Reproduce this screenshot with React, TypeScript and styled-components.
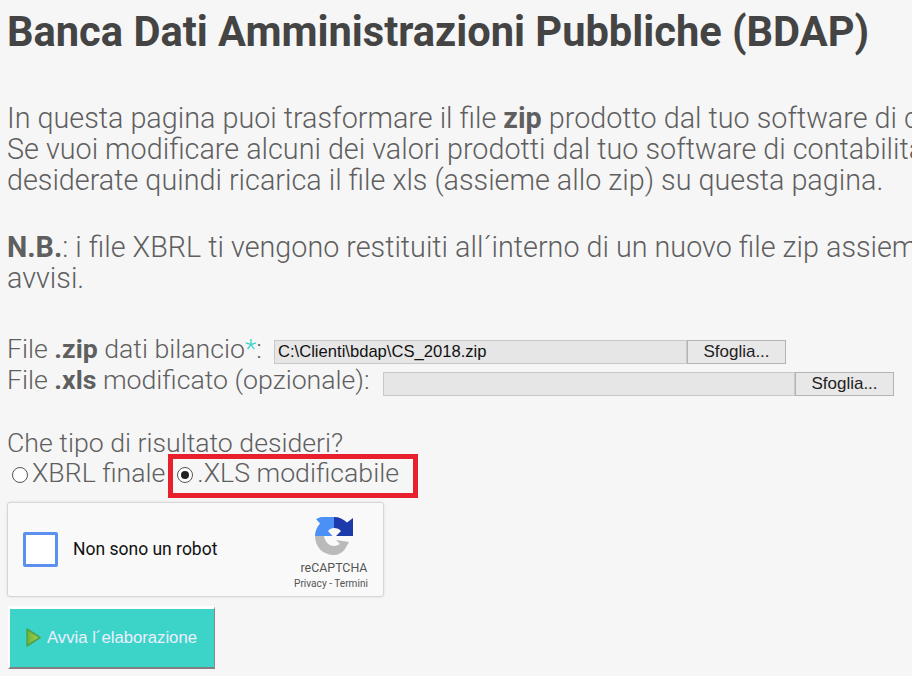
import React from "react";
import styled, { createGlobalStyle } from "styled-components";

const Global = createGlobalStyle`
  html, body { margin: 0; padding: 0; width: 912px; height: 676px; overflow: hidden; background: #f6f6f6; }
`;

const Page = styled.div`
  width: 912px;
  height: 676px;
  overflow: hidden;
  padding: 11px 0 0 7px;
  box-sizing: border-box;
  font-family: Roboto, "Liberation Sans", sans-serif;
  font-weight: 300;
  font-size: 26.7px;
  line-height: 31px;
  color: #5f5f5f;
`;

const Title = styled.h1`
  margin: 0 0 50px;
  font-size: 41.6px;
  line-height: 42px;
  font-weight: 700;
  color: #444;
  white-space: nowrap;
`;

const Paragraph = styled.p`
  margin: 0 0 36px;
  font-size: 28.75px;
  white-space: nowrap;
  b { font-weight: 700; }
`;

const Closing = styled(Paragraph)`
  margin-bottom: 40px;
`;

const FileRow = styled.div`
  display: flex;
  align-items: flex-start;
  height: 31px;
  white-space: nowrap;
  b { font-weight: 700; }
`;

const FileLabel = styled.span<{ $width: number }>`
  width: ${(p) => p.$width}px;
  flex: none;
`;

const Star = styled.span`
  color: #3cd4c8;
`;

const FileFields = styled.div<{ $top: number }>`
  display: flex;
  margin-top: ${(p) => p.$top}px;
`;

const FileName = styled.div<{ $width: number }>`
  width: ${(p) => p.$width}px;
  height: 24px;
  box-sizing: border-box;
  background: #e6e6e6;
  border: 1px solid #c8c8c8;
  font-family: "Liberation Sans", Arial, sans-serif;
  font-weight: 400;
  font-size: 16.6px;
  line-height: 22px;
  padding-left: 3px;
  color: #111;
`;

const Browse = styled.div`
  width: 99px;
  height: 24px;
  box-sizing: border-box;
  background: #e8e8e8;
  border: 1px solid #b4b4b4;
  font-family: "Liberation Sans", Arial, sans-serif;
  font-weight: 400;
  font-size: 17px;
  line-height: 21px;
  text-align: center;
  color: #222;
`;

const Question = styled.div`
  margin-top: 32px;
  height: 26px;
`;

const Choices = styled.div`
  display: flex;
  align-items: center;
  height: 44px;
  padding-left: 5px;
`;

const ChoiceText = styled.span`
  margin-top: -5px;
`;

const Radio = styled.span<{ $on?: boolean }>`
  width: 16px;
  height: 16px;
  box-sizing: border-box;
  border: 1px solid #555;
  border-radius: 50%;
  background: #fff;
  margin-right: 4px;
  margin-top: -2px;
  display: flex;
  align-items: center;
  justify-content: center;
  flex: none;
  &::after {
    content: "";
    display: ${(p) => (p.$on ? "block" : "none")};
    width: 8px;
    height: 8px;
    border-radius: 50%;
    background: #222;
  }
`;

const Highlight = styled.div`
  display: flex;
  align-items: center;
  margin-left: 3px;
  height: 44px;
  width: 250px;
  box-sizing: border-box;
  border: 5px solid #e8202c;
  padding-left: 4px;
`;

const Captcha = styled.div`
  margin-top: 4px;
  width: 377px;
  height: 95px;
  box-sizing: border-box;
  background: #f9f9f9;
  border: 1px solid #d6d6d6;
  border-radius: 3px;
  box-shadow: 0 0 3px rgba(0, 0, 0, 0.1);
  display: flex;
  align-items: center;
  padding-left: 15px;
`;

const Check = styled.div`
  width: 35px;
  height: 35px;
  box-sizing: border-box;
  background: #fff;
  border: 3px solid #5b90ee;
  border-radius: 2px;
  flex: none;
`;

const CaptchaLabel = styled.span`
  margin-left: 15px;
  margin-top: -2px;
  font-weight: 400;
  font-size: 17.5px;
  color: #111;
  line-height: 20px;
`;

const Brand = styled.div`
  margin-left: auto;
  width: 84px;
  margin-right: 7px;
  display: flex;
  flex-direction: column;
  align-items: center;
  align-self: flex-start;
  padding-top: 14px;
`;

const BrandName = styled.span`
  font-weight: 400;
  font-size: 12.4px;
  line-height: 14px;
  color: #555;
  margin-top: 6px;
`;

const BrandLinks = styled.span`
  font-weight: 400;
  font-size: 10.1px;
  line-height: 13px;
  color: #555;
  margin-top: 2px;
  margin-right: 6px;
  white-space: nowrap;
`;

const Start = styled.div`
  margin-top: 9px;
  margin-left: 1px;
  width: 207px;
  height: 63px;
  box-sizing: border-box;
  background: #3cd4c8;
  border-top: 3px solid #fff;
  border-left: 2px solid #fff;
  border-right: 1px solid #8a8a8a;
  border-bottom: 2px solid #808080;
  display: flex;
  align-items: center;
  padding-left: 15px;
  padding-bottom: 2px;
  font-family: "Liberation Sans", Arial, sans-serif;
  font-weight: 400;
  font-size: 16.7px;
  color: #eef;
`;

const PlayIcon = () => (
  <svg width="17" height="19" viewBox="0 0 17 19" style={{ marginRight: 5 }}>
    <defs>
      <linearGradient id="play" x1="0" y1="0" x2="1" y2="0">
        <stop offset="0" stopColor="#6fb03c" />
        <stop offset="1" stopColor="#a6d84e" />
      </linearGradient>
    </defs>
    <path d="M2 1 L15 9.5 L2 18 Z" fill="url(#play)" stroke="#4ea24e" strokeWidth="1.5" strokeLinejoin="round" />
  </svg>
);

const RecaptchaLogo = () => (
  <svg width="38" height="38" viewBox="0 0 38 38">
    <path d="M6 0 H19 V11 C16.500 11 14.500 12 13 14 L17.500 19 H0 C0 14 2 10 5 6.500 L1 2 Z" fill="#4a90f5" />
    <path d="M19 0 C24 0 28.500 2 32 5.500 L38 1 V19 H21 L26 14 C24.500 12 22 11 19 11 Z" fill="#1c3aa9" />
    <path d="M0 19 H9 C10 25 14 29 19 29 C21 29 23 28 25 27 L21 23 L34 25 L30 32 C27 36 23 38 19 38 C8 38 0 30 0 19 Z" fill="#bababa" />
  </svg>
);

export default function App() {
  return (
    <Page>
      <Global />
      <Title>Banca Dati Amministrazioni Pubbliche (BDAP)</Title>
      <Paragraph>
        In questa pagina puoi trasformare il file <b>zip</b> prodotto dal tuo software di contabilità
        <br />
        Se vuoi modificare alcuni dei valori prodotti dal tuo software di contabilità scarica
        <br />
        desiderate quindi ricarica il file xls (assieme allo zip) su questa pagina.
      </Paragraph>
      <Closing>
        <b>N.B.</b>: i file XBRL ti vengono restituiti all´interno di un nuovo file zip assieme
        <br />
        avvisi.
      </Closing>
      <FileRow>
        <FileLabel $width={267}>
          File <b>.zip</b> dati bilancio<Star>*</Star>:
        </FileLabel>
        <FileFields $top={6}>
          <FileName $width={413}>C:\Clienti\bdap\CS_2018.zip</FileName>
          <Browse>Sfoglia...</Browse>
        </FileFields>
      </FileRow>
      <FileRow>
        <FileLabel $width={376}>
          File <b>.xls</b> modificato (opzionale):
        </FileLabel>
        <FileFields $top={7}>
          <FileName $width={412} />
          <Browse>Sfoglia...</Browse>
        </FileFields>
      </FileRow>
      <Question>Che tipo di risultato desideri?</Question>
      <Choices>
        <Radio />
        <ChoiceText>XBRL finale</ChoiceText>
        <Highlight>
          <Radio $on />
          <ChoiceText>.XLS modificabile</ChoiceText>
        </Highlight>
      </Choices>
      <Captcha>
        <Check />
        <CaptchaLabel>Non sono un robot</CaptchaLabel>
        <Brand>
          <RecaptchaLogo />
          <BrandName>reCAPTCHA</BrandName>
          <BrandLinks>Privacy - Termini</BrandLinks>
        </Brand>
      </Captcha>
      <Start>
        <PlayIcon />
        Avvia l´elaborazione
      </Start>
    </Page>
  );
}
